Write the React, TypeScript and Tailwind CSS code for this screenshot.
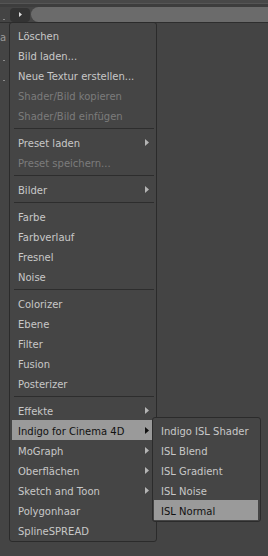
type Item = { label: string; disabled?: boolean; sub?: boolean; active?: boolean } | "sep";

const items: Item[] = [
  { label: "Löschen" },
  { label: "Bild laden..." },
  { label: "Neue Textur erstellen..." },
  { label: "Shader/Bild kopieren", disabled: true },
  { label: "Shader/Bild einfügen", disabled: true },
  "sep",
  { label: "Preset laden", sub: true },
  { label: "Preset speichern...", disabled: true },
  "sep",
  { label: "Bilder", sub: true },
  "sep",
  { label: "Farbe" },
  { label: "Farbverlauf" },
  { label: "Fresnel" },
  { label: "Noise" },
  "sep",
  { label: "Colorizer" },
  { label: "Ebene" },
  { label: "Filter" },
  { label: "Fusion" },
  { label: "Posterizer" },
  "sep",
  { label: "Effekte", sub: true },
  { label: "Indigo for Cinema 4D", sub: true, active: true },
  { label: "MoGraph", sub: true },
  { label: "Oberflächen", sub: true },
  { label: "Sketch and Toon", sub: true },
  { label: "Polygonhaar" },
  { label: "SplineSPREAD" },
];

const subItems = ["Indigo ISL Shader", "ISL Blend", "ISL Gradient", "ISL Noise", "ISL Normal"];

function Arrow({ dark }: { dark?: boolean }) {
  return (
    <svg width="4" height="7" viewBox="0 0 4 7" className="shrink-0">
      <path d="M0 0 L4 3.5 L0 7 Z" fill={dark ? "#111111" : "#b4b4b4"} />
    </svg>
  );
}

export default function App() {
  return (
    <div className="relative w-[268px] h-[556px] overflow-hidden bg-[#444444] font-['DejaVu_Sans',sans-serif] text-[10px]">
      {/* top strip */}
      <div className="h-[3px] bg-[#484848]" />
      <div className="h-[1px] bg-[#555555]" />
      <div className="h-[3px] bg-[#3d3d3d]" />
      <div className="flex items-center h-[15px] pl-[10px] gap-[1px]">
        <div className="w-[20px] h-[14px] rounded-[4px] bg-[#333333] flex items-center justify-center">
          <svg width="3" height="5" viewBox="0 0 3 5">
            <path d="M0 0 L3 2.5 L0 5 Z" fill="#dddddd" />
          </svg>
        </div>
        <div className="flex-1 h-[15px] rounded-l-[8px] bg-[#6b6b6b]" />
      </div>
      <div className="h-[1px] bg-[#2e2e2e]" />

      {/* faint marks behind the menu */}
      <div className="absolute left-[3px] top-[19px] w-[2px] h-[1px] bg-[#8a8a8a]" />
      <div className="absolute left-0 top-[30px] text-[#9a9a9a] leading-[16px]">a</div>
      <div className="absolute left-[3px] top-[60px] w-[2px] h-[1px] bg-[#8a8a8a]" />
      <div className="absolute left-[3px] top-[80px] w-[2px] h-[1px] bg-[#8a8a8a]" />

      {/* context menu */}
      <div className="absolute left-[9px] top-[22px] w-[148px] border border-[#2b2b2b] rounded-[3px] bg-[#454545] pt-[2px] pb-[1px]">
        {items.map((it, i) =>
          it === "sep" ? (
            <div key={i} className="h-[7px] flex items-center pl-[4px] pr-[2px]">
              <div className="h-[1px] w-full bg-[#2d2d2d]" />
            </div>
          ) : (
            <div
              key={i}
              className={
                "ml-[2px] mr-[4px] h-[20px] pl-[6px] pr-[3px] flex items-center justify-between leading-[20px] " +
                (it.active ? "bg-[#9a9a9a] text-[#111111]" : it.disabled ? "text-[#7c7c7c]" : "text-[#c8c8c8]")
              }
            >
              <span className="pt-[3px]">{it.label}</span>
              {it.sub && <Arrow dark={it.active} />}
            </div>
          )
        )}
      </div>

      {/* submenu */}
      <div className="absolute left-[152px] top-[417px] w-[109px] border border-[#2b2b2b] rounded-[3px] bg-[#454545] pt-[2px] pb-[1px]">
        {subItems.map((s, i) => (
          <div
            key={s}
            className={
              "ml-[1px] mr-[2px] h-[20px] pl-[7px] flex items-center leading-[20px] " +
              (i === 4 ? "bg-[#9a9a9a] text-[#111111]" : "text-[#c8c8c8]")
            }
          >
            <span className="pt-[3px]">{s}</span>
          </div>
        ))}
      </div>
    </div>
  );
}
